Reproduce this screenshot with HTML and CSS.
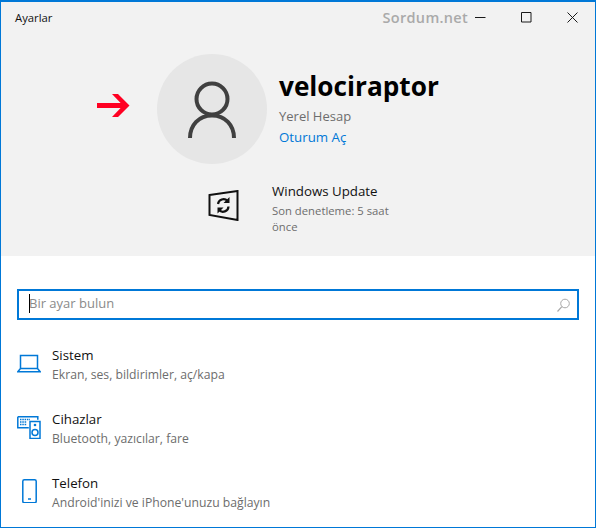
FILE: index.html
```html
<!DOCTYPE html>
<html lang="tr">
<head>
<meta charset="utf-8">
<title>Ayarlar</title>
<link rel="stylesheet" href="styles.css">
</head>
<body>
<div class="window">
  <div class="top">
    <header class="titlebar">
      <span class="app-title">Ayarlar</span>
      <span class="watermark">Sordum.net</span>
      <div class="controls">
        <svg class="ctl" width="11" height="11" viewBox="0 0 11 11"><path d="M0 5.500h10.500" stroke="#1a1a1a" fill="none"/></svg>
        <svg class="ctl" width="11" height="11" viewBox="0 0 11 11"><path d="M.5.500h9.500v9.500H.5z" stroke="#1a1a1a" fill="none"/></svg>
        <svg class="ctl" width="11" height="11" viewBox="0 0 11 11"><path d="M.5.500l10 10M10.500.500l-10 10" stroke="#1a1a1a" fill="none"/></svg>
      </div>
    </header>
    <section class="profile">
      <svg class="arrow" width="33" height="23" viewBox="0 0 33 23"><path d="M0 9h26v5H0z" fill="#ff0022"/><path d="M15 0h6L32.500 11.500 21 23h-6l11-11.500z" fill="#ff0022"/></svg>
      <div class="avatar">
        <svg width="52" height="58" viewBox="0 0 52 58"><circle cx="26" cy="18" r="15.500" stroke="#404040" stroke-width="4" fill="none"/><path d="M4 57c0-13 9-22.500 22-22.500S48 44 48 57" stroke="#404040" stroke-width="4" fill="none"/></svg>
      </div>
      <div class="identity">
        <div class="username">velociraptor</div>
        <div class="account">Yerel Hesap</div>
        <a class="signin">Oturum Aç</a>
      </div>
    </section>
    <section class="update">
      <svg class="update-icon" width="31" height="31" viewBox="0 0 31 31"><path d="M1.500 5L29.500 1V30L1.500 25z" stroke="#111" stroke-width="2" fill="none"/><path d="M10 14a5.500 5.500 0 0 1 9.500-3M20.500 16.500a5.500 5.500 0 0 1-9.500 3.500" stroke="#111" stroke-width="2.200" fill="none"/><path d="M21.500 7v6h-6zM9.500 23.500v-6h6z" fill="#111"/></svg>
      <div class="update-text">
        <div class="update-title">Windows Update</div>
        <div class="update-sub">Son denetleme: 5 saat önce</div>
      </div>
    </section>
  </div>
  <div class="search">
    <span class="caret"></span>
    <span class="placeholder">Bir ayar bulun</span>
    <svg width="13" height="14" viewBox="0 0 13 14"><circle cx="8" cy="5.500" r="4.300" stroke="#a8a8a8" fill="none"/><path d="M4.900 8.600L.5 13.500" stroke="#a8a8a8" stroke-width="1.200" fill="none"/></svg>
  </div>
  <ul class="list">
    <li class="item">
      <svg class="item-icon" width="24" height="24" viewBox="0 0 24 24"><path d="M3.500 4.500h17v13h-17zM3.500 17.500L.8 20.800h22.400l-2.700-3.300" stroke="#0078d7" stroke-width="1.500" fill="none"/></svg>
      <div><div class="item-title">Sistem</div><div class="item-sub">Ekran, ses, bildirimler, aç/kapa</div></div>
    </li>
    <li class="item">
      <svg class="item-icon" width="24" height="24" viewBox="0 0 24 24"><path d="M.8 1.800h20v3M.8 1.800v11h11" stroke="#0078d7" stroke-width="1.500" fill="none"/><path d="M3 4.500h10M3 7h7M3 9.500h7" stroke="#0078d7" stroke-width="1.500" stroke-dasharray="1.500 .8" fill="none"/><rect x="13" y="6.500" width="10" height="17" stroke="#0078d7" stroke-width="1.500" fill="none"/><circle cx="18" cy="17.500" r="3" stroke="#0078d7" stroke-width="1.500" fill="none"/><circle cx="18" cy="10" r="1.300" fill="#0078d7"/></svg>
      <div><div class="item-title">Cihazlar</div><div class="item-sub">Bluetooth, yazıcılar, fare</div></div>
    </li>
    <li class="item">
      <svg class="item-icon" width="24" height="24" viewBox="0 0 24 24"><rect x="5.800" y=".8" width="13.400" height="23" rx="1.500" stroke="#0078d7" stroke-width="1.500" fill="none"/><path d="M11 20h3" stroke="#0078d7" stroke-width="1.500"/></svg>
      <div><div class="item-title">Telefon</div><div class="item-sub">Android'inizi ve iPhone'unuzu bağlayın</div></div>
    </li>
  </ul>
</div>
</body>
</html>
```
FILE: styles.css
```css
* { box-sizing: border-box; }
html, body { margin: 0; padding: 0; height: 100%; }
body { font-family: "Open Sans", "Noto Sans", sans-serif; background: #fff; }
.window {
  width: 596px; height: 528px; border: 1px solid #0078d7; border-top-width: 2px;
  background: #fff; overflow: hidden; display: flex; flex-direction: column;
}
.top { background: #f2f2f2; height: 254px; flex: none; }
.titlebar { display: flex; align-items: center; height: 30px; padding-left: 14px; }
.app-title { font-size: 11.300px; color: #111; flex: 1; }
.watermark { font-size: 14.500px; font-weight: 600; color: #aaa; letter-spacing: .3px; margin-right: 7px; white-space: nowrap; }
.controls { display: flex; padding-right: 17px; gap: 35px; }
.ctl { display: block; }
.profile { display: flex; align-items: flex-start; padding: 22px 0 0 156px; position: relative; height: 132px; }
.arrow { position: absolute; left: 96px; top: 62px; }
.avatar {
  width: 110px; height: 110px; border-radius: 50%; background: #e6e6e6; flex: none;
  display: flex; align-items: center; justify-content: center;
}
.avatar svg { margin-top: 1px; }
.identity { margin-left: 12px; }
.username { font-size: 26.200px; font-weight: 700; line-height: 36px; margin-top: 14px; color: #000; }
.account { font-size: 13px; color: #6d6d6d; line-height: 20px; margin-top: 2px; }
.signin { font-size: 13.300px; color: #0078d7; line-height: 20px; display: block; margin-top: 1px; }
.update { display: flex; padding: 17px 0 0 207px; }
.update-icon { flex: none; margin-top: 9px; }
.update-text { margin-left: 33px; width: 135px; }
.update-title { font-size: 13.300px; line-height: 20px; color: #111; }
.update-sub { font-size: 11.300px; line-height: 16px; color: #6d6d6d; margin-top: 2px; }
.search {
  margin: 33px 16px 0; height: 31px; border: 2px solid #0078d7; background: #fff; flex: none;
  display: flex; align-items: center; padding: 0 7px 0 10px; position: relative;
}
.caret { width: 1px; height: 19px; background: #000; position: absolute; left: 10px; top: 3px; }
.placeholder { flex: 1; font-size: 13px; line-height: 18px; color: #8a8a8a; margin-top: -4px; }
.list { list-style: none; margin: 0; padding: 25px 0 0 16px; }
.item { display: flex; height: 64px; }
.item-icon { flex: none; margin: 6px 11px 0 0; }
.item-title { font-size: 13.300px; line-height: 20px; color: #111; }
.item-sub { font-size: 12.200px; line-height: 18px; color: #6d6d6d; margin-top: 1px; }
```
